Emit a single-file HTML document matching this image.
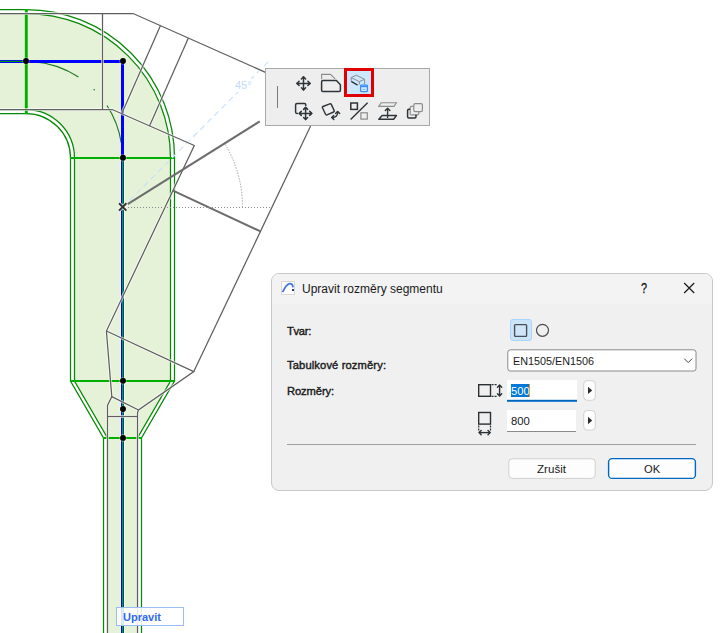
<!DOCTYPE html>
<html><head><meta charset="utf-8">
<style>
html,body{margin:0;padding:0;width:723px;height:633px;overflow:hidden;background:#fff;font-family:"Liberation Sans",sans-serif;}
#cad{position:absolute;left:0;top:0;}
.abs{position:absolute;}
#tb{position:absolute;left:265px;top:68px;width:163px;height:56px;background:#eeeeee;border:1px solid #a9a9a9;}
#dlg{position:absolute;left:271px;top:273px;width:440px;height:216px;background:#f0f0f0;border:1px solid #c9c9c9;border-radius:8px;overflow:hidden;}
#dlg .title{position:absolute;left:0;top:0;width:440px;height:30px;background:#f3f3f3;}
.lbl{position:absolute;font-size:11.2px;font-weight:normal;-webkit-text-stroke:0.4px #1a1a1a;color:#1a1a1a;white-space:nowrap;}
.txt{position:absolute;font-size:11px;color:#1a1a1a;white-space:nowrap;}
</style></head><body>
<svg id="cad" width="723" height="633" viewBox="0 0 723 633">
  <!-- fill -->
  <path d="M0,13.5 L26,13.5 A144.5,144.5 0 0 1 170.5,158 L170.5,381 L137.5,438 L137.5,633 L107.5,633 L107.5,438 L74.5,381 L74.5,158 A48.5,48.5 0 0 0 26,109.5 L0,109.5 Z" fill="#e6f2d8"/>
  <!-- outer double lines -->
  <g fill="none" stroke="#078807" stroke-width="1.25">
    <path d="M0,9.5 L26,9.5 A148.5,148.5 0 0 1 174.5,158 L174.5,381 L141.5,438 L141.5,633"/>
    <path d="M0,13.5 L26,13.5 A144.5,144.5 0 0 1 170.5,158 L170.5,381 L137.5,438 L137.5,633"/>
    <path d="M0,113.5 L26,113.5 A44.5,44.5 0 0 1 70.5,158 L70.5,381 L103.5,438 L103.5,633"/>
    <path d="M0,109.5 L26,109.5 A48.5,48.5 0 0 1 74.5,158 L74.5,381 L107.5,438 L107.5,633"/>
  </g>
  <!-- center dashed arc -->
  <g fill="none" stroke="#1f7a1f" stroke-width="1.2">
    <path d="M32.7,61.7 A96.5,96.5 0 0 1 78.5,77.1 M107,105.5 A96.5,96.5 0 0 1 121.3,143"/>
    <circle cx="94.2" cy="89.8" r="0.8" fill="#1f7a1f" stroke="none"/>
  </g>
  <!-- segment boundaries -->
  <g stroke="#00b000" stroke-width="2.2">
    <line x1="26.3" y1="9" x2="26.3" y2="114" stroke-width="2.9"/>
    <line x1="70" y1="158" x2="175" y2="158"/>
    <line x1="70" y1="381" x2="175" y2="381"/>
    <line x1="103" y1="438" x2="142" y2="438"/>
  </g>
  <!-- blue centre -->
  <path d="M26,61.5 L122.5,61.5 L122.5,158" fill="none" stroke="#0000ff" stroke-width="3"/>
  <line x1="0" y1="61.5" x2="26" y2="61.5" stroke="#0000ff" stroke-width="3"/>
  <line x1="0" y1="61.4" x2="26" y2="61.4" stroke="#00a000" stroke-width="1.1"/>
  <rect x="120" y="158" width="5" height="475" fill="#f6fce4"/>
  <rect x="121" y="158" width="1" height="475" fill="#0000ff"/>
  <rect x="122" y="158" width="1" height="475" fill="#00aa00"/>
  <rect x="123" y="158" width="1" height="475" fill="#0038c8"/>
  <path d="M122.5,207.5 L268.9,61.1" stroke="#c8e2fb" stroke-width="1.2" stroke-dasharray="6,4"/>
  <!-- halo -->
  <g fill="none" stroke="#ffffff" stroke-width="3" stroke-opacity="0.65" stroke-linejoin="round">
    <path d="M0,13.5 L133.1,13.5 L265.5,72.4"/>
    <path d="M102.5,13.5 L102.5,109.5"/>
    <path d="M0,109.5 L112.2,109.5 L194.3,145.5 L106.4,331 L111.8,396.6 L107.5,405.5 L107.5,633"/>
    <path d="M106.4,331 L193.8,371.6 L138.5,410 L137.5,412.8 L137.5,633"/>
    <path d="M111.8,396.6 L138.5,410"/>
    <path d="M107.5,416.5 L137.5,416.5"/>
    <path d="M160.5,25.4 L121.7,113.7"/>
    <path d="M188.4,38.1 L149.5,125.9"/>
    <path d="M310.6,126.1 L193.8,371.6"/>
  </g>
  <!-- gray thin lines -->
  <g fill="none" stroke="#5f5f5f" stroke-width="1.25">
    <path d="M0,13.5 L133.1,13.5 L265.5,72.4"/>
    <path d="M102.5,13.5 L102.5,109.5"/>
    <path d="M0,109.5 L112.2,109.5 L194.3,145.5 L106.4,331 L111.8,396.6 L107.5,405.5 L107.5,633"/>
    <path d="M106.4,331 L193.8,371.6 L138.5,410 L137.5,412.8 L137.5,633"/>
    <path d="M111.8,396.6 L138.5,410"/>
    <path d="M107.5,416.5 L137.5,416.5"/>
    <path d="M160.5,25.4 L121.7,113.7"/>
    <path d="M188.4,38.1 L149.5,125.9"/>
    <path d="M310.6,126.1 L193.8,371.6"/>
  </g>
  <g fill="none" stroke="#6c6c6c" stroke-width="2">
    <path d="M127.7,204.2 L259.7,121.4"/>
    <path d="M173,190.6 L260.5,231.4"/>
  </g>
  <!-- dotted -->
  <path d="M128,207.5 L272,207.5" stroke="#8a8a8a" stroke-width="1" stroke-dasharray="1,2"/>
  <path d="M242.5,207.2 A119.9,119.9 0 0 0 225.2,144.4" fill="none" stroke="#9c9c9c" stroke-width="1" stroke-dasharray="1.3,1.5"/>
  <!-- light blue dashed -->
  <ellipse cx="244" cy="85" rx="13" ry="8" fill="#fff" fill-opacity="0.9"/>
  <text x="235" y="89" font-family="Liberation Sans" font-size="11" fill="#c0dcf8">45°</text>
  <!-- X mark -->
  <g stroke="#ffffff" stroke-width="3.6" stroke-opacity="0.8">
    <line x1="119" y1="203.2" x2="126.4" y2="210.6"/>
    <line x1="126.4" y1="203.2" x2="119" y2="210.6"/>
  </g>
  <g stroke="#333333" stroke-width="2">
    <line x1="119" y1="203.2" x2="126.4" y2="210.6"/>
    <line x1="126.4" y1="203.2" x2="119" y2="210.6"/>
  </g>
  <!-- black dots -->
  <g fill="#fffff0" fill-opacity="0.45">
    <circle cx="26" cy="61" r="3.6"/>
    <circle cx="123" cy="61" r="3.6"/>
    <circle cx="123" cy="157.8" r="3.6"/>
    <circle cx="123" cy="380.8" r="3.6"/>
    <circle cx="123" cy="409" r="3.6"/>
    <circle cx="123" cy="437.9" r="3.6"/>
  </g>
  <g fill="#000">
    <circle cx="26" cy="61" r="2.95"/>
    <circle cx="123" cy="61" r="2.95"/>
    <circle cx="123" cy="157.8" r="2.95"/>
    <circle cx="123" cy="380.8" r="2.95"/>
    <circle cx="123" cy="409" r="2.95"/>
    <circle cx="123" cy="437.9" r="2.95"/>
  </g>
</svg>


<div id="tb"></div>
<svg class="abs" style="left:265px;top:68px" width="166" height="58" viewBox="265 68 166 58">
  <line x1="277.5" y1="86" x2="277.5" y2="108" stroke="#7a7a7a" stroke-width="1"/>
  <!-- move -->
  <g fill="none" stroke="#2e3438" stroke-width="1.5" stroke-linecap="round" stroke-linejoin="round">
    <path d="M303.5,77 L303.5,90 M297,83.4 L310,83.4"/>
    <path d="M301.4,79 L303.5,76.9 L305.6,79 M301.4,87.8 L303.5,89.9 L305.6,87.8 M299.1,81.3 L297,83.4 L299.1,85.5 M307.9,81.3 L310,83.4 L307.9,85.5"/>
  </g>
  <!-- shape -->
  <path d="M321.6,79.2 L321.6,74.4 L330.5,74.4 L335.2,78.8" fill="none" stroke="#8c8c8c" stroke-width="1.1"/>
  <path d="M322.8,80.6 L336.4,80.6 L340.4,84.8 L340.4,90.3 Q340.4,91.6 339.1,91.6 L322.8,91.6 Q321.6,91.6 321.6,90.3 L321.6,81.9 Q321.6,80.6 322.8,80.6 Z" fill="none" stroke="#2e3438" stroke-width="1.5"/>
  <!-- red selected -->
  <rect x="345.5" y="69.5" width="27" height="26" fill="#cce8ff" stroke="#e00000" stroke-width="3"/>
  <g fill="none" stroke="#8c8c8c" stroke-width="1">
    <path d="M351.2,77.6 L356.3,75.2 L364.6,79.3 L359.3,81.6 Z M359.3,81.6 L359.3,84.6 M364.6,79.3 L364.6,84.4 M351.2,77.6 L351.2,80.8"/>
  </g>
  <path d="M351.2,81.4 L357.6,85.1" stroke="#2e3438" stroke-width="1.4"/>
  <rect x="360.6" y="85.2" width="6.8" height="6.4" rx="0.8" fill="#d6ecff" stroke="#3b8cff" stroke-width="1.3"/>
  <line x1="360.6" y1="86.6" x2="367.4" y2="86.6" stroke="#3b8cff" stroke-width="1.2"/>
  <line x1="362.6" y1="89.4" x2="365.4" y2="89.4" stroke="#7fb4ff" stroke-width="1"/>
  <!-- row2: drag move -->
  <g fill="none" stroke="#2e3438" stroke-width="1.5" stroke-linecap="round" stroke-linejoin="round">
    <path d="M297.4,113.6 Q295.6,113.6 295.6,112 L295.6,105 Q295.6,103.6 297,103.6 L304.4,103.6 Q305.8,103.6 305.8,105 L305.8,105.6"/>
    <path d="M305.6,107.5 L305.6,119.5 M299.3,113.4 L311.7,113.4"/>
    <path d="M303.6,109.4 L305.6,107.4 L307.6,109.4 M303.6,117.5 L305.6,119.5 L307.6,117.5 M301.3,111.4 L299.3,113.4 L301.3,115.4 M309.7,111.4 L311.7,113.4 L309.7,115.4"/>
  </g>
  <!-- rotate -->
  <g fill="none" stroke="#2e3438" stroke-width="1.4" stroke-linecap="round" stroke-linejoin="round">
    <path d="M322.6,108 Q321.9,107 323,106.5 L329.7,103.8 Q330.8,103.4 331.3,104.4 L334.2,110.6 Q334.6,111.6 333.6,112 L327,114.8 Q326,115.2 325.5,114.2 Z"/>
    <path d="M331.9,117.5 Q338.2,117.6 337.6,111.6"/>
    <path d="M333.7,115.6 L331.8,117.5 L333.8,119.5 M335.6,113.6 L337.6,111.5 L339.7,113.5"/>
  </g>
  <!-- split -->
  <rect x="350.8" y="103" width="6.6" height="6.4" fill="none" stroke="#2e3438" stroke-width="1.5"/>
  <line x1="350.6" y1="119.5" x2="367.6" y2="102.7" stroke="#2e3438" stroke-width="1.4"/>
  <rect x="360.9" y="112.8" width="6.4" height="6.3" fill="none" stroke="#8c8c8c" stroke-width="1.2"/>
  <!-- elevation -->
  <path d="M378.8,106.4 L381.2,102.8 L396.4,102.8 L394,106.4 Z" fill="none" stroke="#8c8c8c" stroke-width="1.1"/>
  <path d="M378.8,119.2 L382.2,115.6 L396.4,115.6 L393.6,119.2 Z" fill="none" stroke="#2e3438" stroke-width="1.5" stroke-linejoin="round"/>
  <path d="M387.6,117.4 L387.6,108.6 M385.3,110.6 L387.6,108.3 L389.9,110.6" fill="none" stroke="#2e3438" stroke-width="1.4" stroke-linecap="round" stroke-linejoin="round"/>
  <!-- copy -->
  <rect x="413.8" y="103.6" width="8.6" height="8" rx="1.4" fill="none" stroke="#8c8c8c" stroke-width="1.2"/>
  <path d="M410.2,114.6 L410.2,107.6 Q410.2,106.4 411.4,106.4 L413.6,106.4 M418.8,111.8 L418.8,113.6 Q418.8,114.8 417.6,114.8 L410.4,114.8" fill="none" stroke="#8c8c8c" stroke-width="1.2"/>
  <path d="M407.6,117 L407.6,110.4 Q407.6,109.2 408.8,109.2 L410.2,109.2 M416,114.8 L416,116.8 Q416,118 414.8,118 L408.8,118 Q407.6,118 407.6,116.8" fill="none" stroke="#2e3438" stroke-width="1.5"/>
</svg>

<div id="dlg"><div class="title"></div></div>

<svg class="abs" style="left:0;top:0" width="723" height="633" viewBox="0 0 723 633">
  <!-- title icon -->
  <rect x="281.5" y="281.5" width="13" height="13" fill="#fff" stroke="#d8d8d8" stroke-width="1"/>
  <path d="M282.6,292.2 Q286.2,284.2 289.8,283.6 Q292.6,283.3 293,287.4" fill="none" stroke="#4477dd" stroke-width="1.8"/>
  <rect x="292" y="289" width="2" height="2" fill="#1b3a8f"/>
  <!-- close X -->
  <path d="M684.2,283 L694.2,293 M694.2,283 L684.2,293" stroke="#1a1a1a" stroke-width="1.2"/>
  <!-- toggle -->
  <rect x="510.5" y="319.5" width="21" height="21" rx="2.5" fill="#cce4f7" stroke="#a8d4ff" stroke-width="1"/>
  <rect x="514.6" y="324.6" width="12" height="11.8" rx="0.8" fill="#d0e6f8" stroke="#4a5058" stroke-width="1.4"/>
  <circle cx="542.5" cy="330.3" r="6" fill="none" stroke="#4d4d4d" stroke-width="1.2"/>
  <!-- dropdown -->
  <rect x="507.8" y="349.8" width="188.2" height="21.2" rx="2.5" fill="#fff" stroke="#8a8a8a" stroke-width="1"/>
  <path d="M684.2,358.6 L688.2,362.6 L692.2,358.6" fill="none" stroke="#444" stroke-width="1"/>
  <!-- dim icon 1 -->
  <rect x="478.7" y="384.7" width="11.8" height="11.6" fill="none" stroke="#2b3034" stroke-width="1.4"/>
  <path d="M491.6,384.7 L497.6,384.7 M491.6,396.3 L497.6,396.3" stroke="#2b3034" stroke-width="1.2" stroke-dasharray="2,1"/>
  <path d="M499.6,385 L499.6,396" stroke="#2b3034" stroke-width="1.4"/>
  <path d="M497.5,387.3 L499.6,385 L501.7,387.3 M497.5,393.7 L499.6,396 L501.7,393.7" fill="none" stroke="#2b3034" stroke-width="1.4" stroke-linecap="round" stroke-linejoin="round"/>
  <!-- dim icon 2 -->
  <rect x="478.7" y="412.5" width="11.8" height="11.6" fill="none" stroke="#2b3034" stroke-width="1.4"/>
  <path d="M478.7,425.6 L478.7,431 M490.5,425.6 L490.5,431" stroke="#2b3034" stroke-width="1.2" stroke-dasharray="2,1"/>
  <path d="M479,432.6 L490.2,432.6" stroke="#2b3034" stroke-width="1.4"/>
  <path d="M481.2,430.5 L479,432.6 L481.2,434.7 M488,430.5 L490.2,432.6 L488,434.7" fill="none" stroke="#2b3034" stroke-width="1.4" stroke-linecap="round" stroke-linejoin="round"/>
  <!-- input 1 -->
  <rect x="507" y="380" width="70" height="21.8" fill="#fff"/>
  <rect x="507" y="399.8" width="70" height="2" fill="#0067c0"/>
  <rect x="511" y="384" width="18" height="13" fill="#0078d7"/>
  <rect x="529" y="384" width="1" height="13" fill="#ff8c1a"/>
  <!-- arrow btn 1 -->
  <rect x="583.7" y="380.7" width="11.6" height="19.6" rx="3.5" fill="#fdfdfd" stroke="#d2d2d2" stroke-width="1"/>
  <path d="M588,386.8 L592.2,390.4 L588,394 Z" fill="#2b2b2b"/>
  <!-- input 2 -->
  <rect x="507" y="410" width="69" height="21.6" fill="#fff"/>
  <rect x="507" y="431" width="69" height="1" fill="#8a8a8a"/>
  <rect x="583.7" y="410.5" width="11.6" height="19.6" rx="3.5" fill="#fdfdfd" stroke="#d2d2d2" stroke-width="1"/>
  <path d="M588,416.7 L592.2,420.5 L588,424.3 Z" fill="#2b2b2b"/>
  <!-- separator -->
  <line x1="287" y1="444.5" x2="696" y2="444.5" stroke="#a0a0a0" stroke-width="1"/>
  <!-- buttons -->
  <rect x="508.8" y="458.8" width="86.4" height="19.6" rx="3.5" fill="#fdfdfd" stroke="#d0d0d0" stroke-width="1"/>
  <rect x="608.6" y="458.6" width="86.8" height="19.8" rx="3.5" fill="#fdfdfd" stroke="#0067c0" stroke-width="1.4"/>
</svg>

<div class="txt" style="left:302px;top:282px;font-size:12px;">Upravit rozměry segmentu</div>
<div class="txt" style="left:641px;top:280px;font-size:14px;-webkit-text-stroke:0.3px #1a1a1a;transform:scaleX(0.78);transform-origin:0 0;">?</div>
<div class="lbl" style="left:287px;top:325px;letter-spacing:-0.3px;">Tvar:</div>
<div class="lbl" style="left:287px;top:359px;letter-spacing:0.12px;">Tabulkové rozměry:</div>
<div class="lbl" style="left:287px;top:385px;letter-spacing:-0.1px;">Rozměry:</div>
<div class="txt" style="left:513px;top:354.5px;font-size:10.8px;">EN1505/EN1506</div>
<div class="txt" style="left:511px;top:384.8px;font-size:11.2px;color:#fff;">500</div>
<div class="txt" style="left:511px;top:415px;font-size:11.3px;">800</div>
<div class="txt" style="left:537px;top:461.5px;font-size:11.6px;">Zrušit</div>
<div class="txt" style="left:644px;top:463px;font-size:11.2px;">OK</div>
<div class="abs" style="left:116px;top:607px;width:66px;height:17px;border:1px solid #9cbcf6;background:rgba(255,255,255,0.86);"></div>
<div class="txt" style="left:123px;top:611px;font-size:11px;font-weight:bold;color:#2f6af0;">Upravit</div>
</body></html>
